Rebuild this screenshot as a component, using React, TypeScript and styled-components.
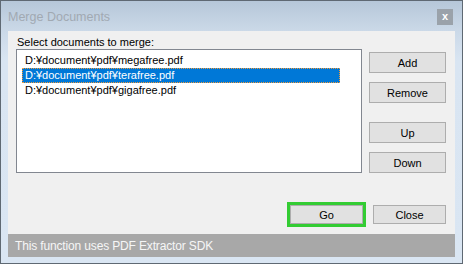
import React from "react";
import styled, { createGlobalStyle } from "styled-components";

const GlobalStyle = createGlobalStyle`
  html, body {
    margin: 0;
    padding: 0;
    background: #ffffff;
  }
  * {
    box-sizing: border-box;
  }
`;

const Window = styled.div`
  width: 463px;
  height: 264px;
  border: 1px solid #5f6973;
  background: linear-gradient(to bottom, #b6c7d9 0px, #cbd9e8 30px, #d9e5f2 60px, #dae6f3 100%);
  display: flex;
  flex-direction: column;
  font-family: "Liberation Sans", Arial, sans-serif;
`;

const TitleBar = styled.div`
  height: 30px;
  display: flex;
  align-items: center;
  padding: 0 9px 0 7px;
`;

const Title = styled.span`
  flex: 1;
  font-size: 12.5px;
  color: #a1a9b2;
  margin-top: 2px;
`;

const CloseBox = styled.div`
  width: 16px;
  height: 16px;
  margin-top: 1px;
  background: #9aa2aa;
  color: #ffffff;
  font-size: 11px;
  font-weight: bold;
  display: flex;
  align-items: center;
  justify-content: center;
  line-height: 1;
`;

const Client = styled.div`
  margin: 0 7px 6px 7px;
  height: 226px;
  background: #f0f0f0;
  display: flex;
  flex-direction: column;
`;

const Label = styled.div`
  font-size: 11px;
  color: #000;
  padding: 5px 0 0 9px;
  height: 18px;
  line-height: 12px;
`;

const Body = styled.div`
  display: flex;
  gap: 7px;
  padding: 0 9px 0 8px;
`;

const ListBox = styled.div`
  width: 346px;
  height: 124px;
  background: #ffffff;
  border: 1px solid #828790;
  padding: 3px 0 0 5px;
`;

const Row = styled.div<{ $selected?: boolean }>`
  width: 318px;
  height: 15px;
  font-size: 11px;
  line-height: 13px;
  padding-left: 2px;
  color: ${({ $selected }) => ($selected ? "#ffffff" : "#000000")};
  background: ${({ $selected }) => ($selected ? "#0078d7" : "transparent")};
  border: 1px dotted ${({ $selected }) => ($selected ? "#f09a3a" : "transparent")};
  white-space: nowrap;
`;

const ButtonColumn = styled.div`
  display: flex;
  flex-direction: column;
  gap: 9px;
  padding-top: 3px;
`;

const Button = styled.div<{ $gapBefore?: number }>`
  width: 77px;
  height: 21px;
  background: #e1e1e1;
  border: 1px solid #adadad;
  font-size: 11px;
  color: #000;
  display: flex;
  align-items: center;
  justify-content: center;
  margin-top: ${({ $gapBefore }) => $gapBefore ?? 0}px;
`;

const Footer = styled.div`
  margin-top: auto;
  display: flex;
  justify-content: flex-end;
  align-items: center;
  gap: 7px;
  padding: 0 9px 7px 0;
`;

const FocusRing = styled.div`
  border: 3px solid #33cc33;
`;

const FooterButton = styled.div`
  width: 73px;
  height: 19px;
  background: #e1e1e1;
  border: 1px solid #adadad;
  font-size: 11px;
  color: #000;
  display: flex;
  align-items: center;
  justify-content: center;
`;

const StatusBar = styled.div`
  height: 23px;
  background: #a8a8a8;
  color: #f6f6f6;
  font-size: 12px;
  display: flex;
  align-items: center;
  padding-left: 7px;
  letter-spacing: -0.15px;
`;

const files = [
  "D:¥document¥pdf¥megafree.pdf",
  "D:¥document¥pdf¥terafree.pdf",
  "D:¥document¥pdf¥gigafree.pdf",
];

export default function App() {
  return (
    <>
      <GlobalStyle />
      <Window>
        <TitleBar>
          <Title>Merge Documents</Title>
          <CloseBox>x</CloseBox>
        </TitleBar>
        <Client>
          <Label>Select documents to merge:</Label>
          <Body>
            <ListBox>
              {files.map((f, i) => (
                <Row key={f} $selected={i === 1}>
                  {f}
                </Row>
              ))}
            </ListBox>
            <ButtonColumn>
              <Button>Add</Button>
              <Button>Remove</Button>
              <Button $gapBefore={10}>Up</Button>
              <Button>Down</Button>
            </ButtonColumn>
          </Body>
          <Footer>
            <FocusRing>
              <FooterButton>Go</FooterButton>
            </FocusRing>
            <FooterButton>Close</FooterButton>
          </Footer>
          <StatusBar>This function uses PDF Extractor SDK</StatusBar>
        </Client>
      </Window>
    </>
  );
}
